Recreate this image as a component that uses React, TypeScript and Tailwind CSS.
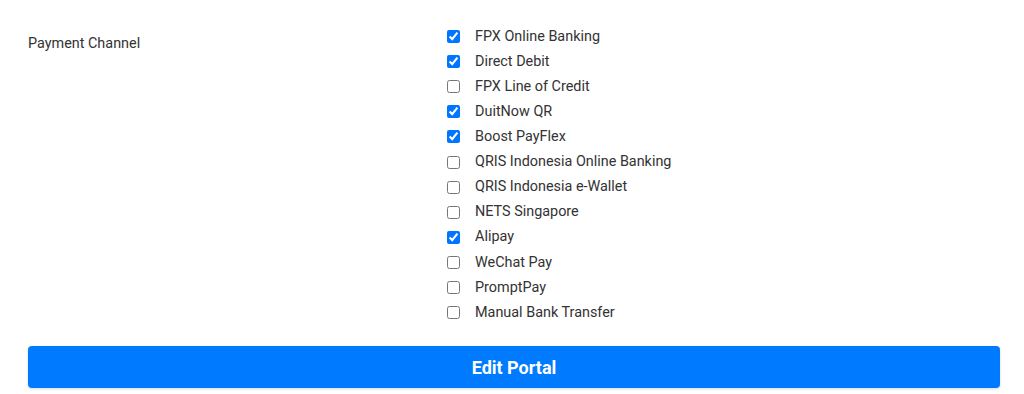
const channels = [
  { name: 'FPX Online Banking', checked: true },
  { name: 'Direct Debit', checked: true },
  { name: 'FPX Line of Credit', checked: false },
  { name: 'DuitNow QR', checked: true },
  { name: 'Boost PayFlex', checked: true },
  { name: 'QRIS Indonesia Online Banking', checked: false },
  { name: 'QRIS Indonesia e-Wallet', checked: false },
  { name: 'NETS Singapore', checked: false },
  { name: 'Alipay', checked: true },
  { name: 'WeChat Pay', checked: false },
  { name: 'PromptPay', checked: false },
  { name: 'Manual Bank Transfer', checked: false },
];

export default function App() {
  return (
    <div className="bg-white pl-[28px] pr-[24px] pt-[24px] pb-[6px] text-[14.4px] text-[#333333] font-['Roboto',sans-serif]">
      <div className="flex">
        <div className="w-[419px] shrink-0 pt-[10px] leading-[20px]">Payment Channel</div>
        <div className="flex flex-col">
          {channels.map((c) => (
            <label key={c.name} className="flex items-center h-[25.1px] gap-[15px]">
              <input
                type="checkbox"
                defaultChecked={c.checked}
                className="w-[13px] h-[13px] m-0 accent-[#0075ff]"
              />
              <span>{c.name}</span>
            </label>
          ))}
        </div>
      </div>
      <button className="mt-[21px] w-full h-[42px] rounded-[4px] bg-[#007bff] text-white text-[18px] font-bold shadow-[0_1px_3px_rgba(0,0,0,0.15)]">
        Edit Portal
      </button>
    </div>
  );
}
